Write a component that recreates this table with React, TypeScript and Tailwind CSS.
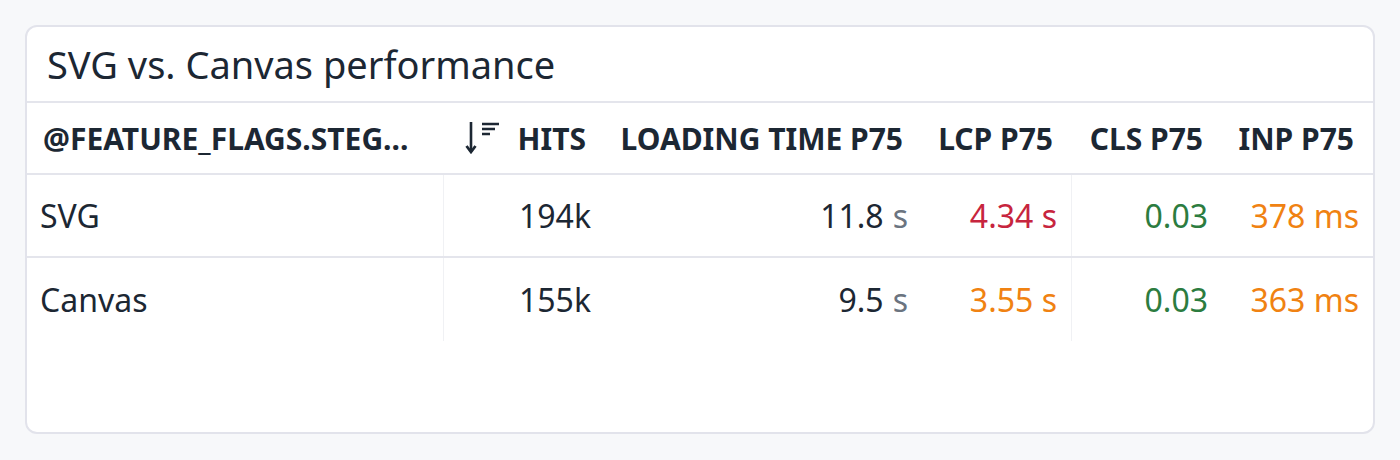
import * as React from 'react'

type Tone = 'dark' | 'red' | 'orange' | 'green'

const toneClass: Record<Tone, string> = {
  dark: 'text-[#1c2733]',
  red: 'text-[#c7253e]',
  orange: 'text-[#f08212]',
  green: 'text-[#2c7c3f]',
}

const rows = [
  {
    name: 'SVG',
    hits: '194k',
    loading: { v: '11.8', tone: 'dark' as Tone },
    lcp: { v: '4.34', tone: 'red' as Tone },
    cls: { v: '0.03', tone: 'green' as Tone },
    inp: { v: '378', tone: 'orange' as Tone },
  },
  {
    name: 'Canvas',
    hits: '155k',
    loading: { v: '9.5', tone: 'dark' as Tone },
    lcp: { v: '3.55', tone: 'orange' as Tone },
    cls: { v: '0.03', tone: 'green' as Tone },
    inp: { v: '363', tone: 'orange' as Tone },
  },
]

function SortIcon() {
  return (
    <svg width="36" height="34" viewBox="0 0 36 34" className="text-[#1c2733]">
      <path d="M6 1 V31" stroke="currentColor" strokeWidth="2.6" fill="none" />
      <path d="M1.5 25 L6 31 L10.5 25" stroke="currentColor" strokeWidth="2.8" fill="none" />
      <path d="M17 3 H34 M17 8 H30 M17 13 H25" stroke="currentColor" strokeWidth="2.6" fill="none" />
    </svg>
  )
}

export default function App() {
  const cols = 'grid grid-cols-[417px_161px_317px_150px_150px_1fr]'
  const head = 'flex items-center justify-end pr-[19px] text-[30px] font-bold'
  const cell = 'flex items-center justify-end pr-[14px]'

  return (
    <div
      className="h-[460px] w-[1400px] bg-[#f7f8fa] pt-[25px] pl-[25px]"
      style={{ fontFamily: '"Noto Sans", "Open Sans", sans-serif' }}
    >
      <div className="flex h-[409px] w-[1350px] flex-col overflow-hidden rounded-[12px] border-2 border-[#e2e3eb] bg-white text-[#1c2733]">
        <div className="flex h-[76px] items-center border-b-2 border-[#e4e5ec] pl-[20px] text-[38px]">
          SVG vs. Canvas performance
        </div>

        <div className={`${cols} h-[72px] border-b-2 border-[#e4e5ec]`}>
          <div className="flex items-center pl-[16px] text-[30px] font-bold">
            @FEATURE_FLAGS.STEG...
          </div>
          <div className="flex items-center justify-end gap-[17px] pr-[19px]">
            <SortIcon />
            <span className="text-[30px] font-bold">HITS</span>
          </div>
          <div className={head}>LOADING TIME P75</div>
          <div className={head}>LCP P75</div>
          <div className={head}>CLS P75</div>
          <div className={`${head} pr-[17px]`}>INP P75</div>
        </div>

        {rows.map((r, i) => (
          <div
            key={r.name}
            className={`${cols} h-[83px] text-[32px] ${i === 0 ? 'border-b-2 border-[#e4e5ec]' : ''}`}
          >
            <div className="flex items-center border-r border-[#f0f1f4] pl-[13px]">{r.name}</div>
            <div className={cell}>{r.hits}</div>
            <div className={cell}>
              <span className={toneClass[r.loading.tone]}>{r.loading.v}</span>
              <span className="ml-[9px] text-[#6b7480]">s</span>
            </div>
            <div className={`${cell} border-r border-[#f0f1f4] ${toneClass[r.lcp.tone]}`}>
              {r.lcp.v}&nbsp;s
            </div>
            <div className={`${cell} ${toneClass[r.cls.tone]}`}>{r.cls.v}</div>
            <div className={`${cell} ${toneClass[r.inp.tone]}`}>{r.inp.v}&nbsp;ms</div>
          </div>
        ))}
      </div>
    </div>
  )
}
